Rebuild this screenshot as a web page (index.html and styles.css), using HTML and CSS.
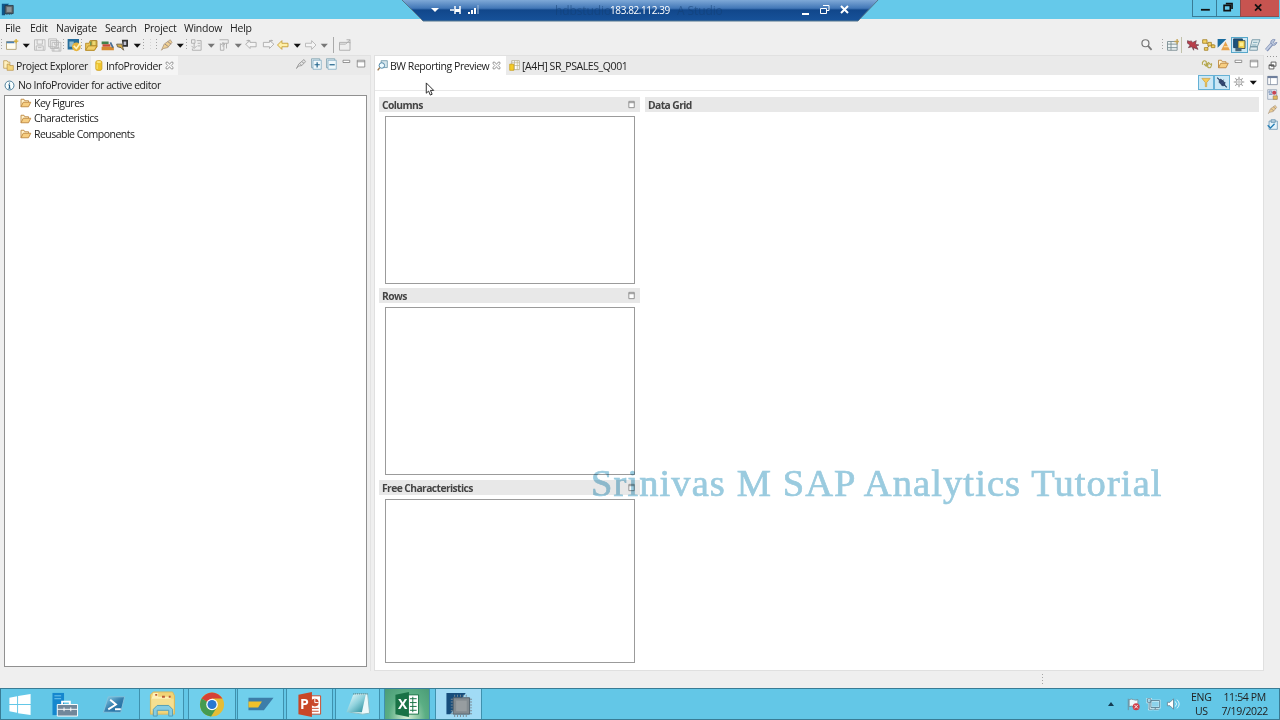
FILE: index.html
```html
<!DOCTYPE html>
<html lang="en">
<head>
    <meta charset="UTF-8">
    <title>hdbstudio - SAP HANA Studio</title>
    <link rel="stylesheet" href="styles.css">
</head>
<body>
<!-- icon set -->
<svg class="sprite" width="0" height="0">
    <defs>
        <linearGradient id="blueGlass" x1="0" y1="0" x2="1" y2="1">
            <stop offset="0" stop-color="#8fd6ee"/><stop offset=".5" stop-color="#367fae"/><stop offset="1" stop-color="#14679f"/>
        </linearGradient>
        <linearGradient id="paper" x1="0" y1="0" x2="1" y2="1">
            <stop offset="0" stop-color="#f3ffff"/><stop offset=".5" stop-color="#8ed1dc"/><stop offset="1" stop-color="#218794"/>
        </linearGradient>
        <linearGradient id="barFill" x1="0" y1="0" x2="0" y2="1">
            <stop offset="0" stop-color="#86afdb"/><stop offset=".42" stop-color="#4277b7"/><stop offset=".5" stop-color="#11478b"/><stop offset="1" stop-color="#17529a"/>
        </linearGradient>
    </defs>
    <symbol id="chip" viewBox="0 0 16 16"><path d="M1 1h9L5 6v9H1z" fill="#0d5588"/><path d="M5 3h10v10H5z" fill="#5c6469" stroke="#253746"/><path d="M7 5h6v6H7z" fill="#8c9598"/><path d="M4 14h10" stroke="#31424d" stroke-dasharray="1 1"/></symbol>
    <symbol id="new" viewBox="0 0 16 16"><path d="M2 4h11v9H2z" fill="#fffdf1" stroke="#ad9d70"/><path d="M2 4h9v2H2z" fill="#4c82b5"/><path d="M13 1v5M10.500 3.500h5" stroke="#d6ad32" stroke-width="1.500"/></symbol>
    <symbol id="save" viewBox="0 0 16 16"><path d="M2 2h12v12H2zM5 2v5h6V2M4 14v-5h8v5M6 11h4" fill="#eee" stroke="#b8b8b8"/></symbol>
    <symbol id="saveall" viewBox="0 0 16 16"><path d="M1 1h9v9H1zM3 3h9v9H3zM5 5h10v10H5zM8 5v3h4V5M7 15v-4h6v4" fill="#eee" stroke="#b8b8b8"/></symbol>
    <symbol id="schedule" viewBox="0 0 16 16"><path d="M1 1h13v12H1z" fill="#236d9d"/><path d="M3 4h5v6H3z" fill="#90bbcd"/><circle cx="11" cy="10" r="5" fill="#e6b43e"/><path d="M8 9l3 3 5-7" fill="none" stroke="#fff4bd" stroke-width="1.800"/></symbol>
    <symbol id="openproj" viewBox="0 0 16 16"><path d="M1 14V6h4l1-3h8v7l-3 4z" fill="#eac557" stroke="#b68a27"/><path d="M6 10V4h5v6z" fill="#719b54"/><path d="M8 3h5v6H8z" fill="#eed86e" stroke="#a68532"/><path d="M1 14l3-5h10l-3 5z" fill="#f1cf69" stroke="#b68a27"/></symbol>
    <symbol id="books" viewBox="0 0 16 16"><path d="M1 4h8v3H1z" fill="#41824b"/><path d="M2 7h9v3H2z" fill="#c84c38"/><path d="M1 10h14v4H1z" fill="#d58a31"/><path d="M11 5l3 6" stroke="#486f95" stroke-width="2"/></symbol>
    <symbol id="debug" viewBox="0 0 16 16"><path d="M7 2h7v8H8z" fill="#333"/><path d="M9 4h3v4H9z" fill="#c2c4d4"/><path d="M1 7h6l2 7-3-3-4-1z" fill="#d6af4c" stroke="#675b49"/></symbol>
    <symbol id="torch" viewBox="0 0 16 16"><path d="M2 14L5 7l7-5 2 3-5 6-5 1z" fill="#efcf92" stroke="#b09a80"/><path d="M6 7l4 3M9 4l4 3" stroke="#8f8487"/></symbol>
    <symbol id="torchgray" viewBox="0 0 16 16"><path d="M2 14l3-6 7-6 2 3-5 5-5 1z" fill="#e5e5e5" stroke="#8c8c8c"/><path d="M6 7l3 3M9 5l3 2" stroke="#8c8c8c"/></symbol>
    <symbol id="annotdown" viewBox="0 0 16 16"><path d="M2 2h4v4H2zM5 6v5M2 9l3 3 3-3M8 3h5v11H3v-2" fill="none" stroke="#aaa"/><path d="M9 6h3M9 9h3" stroke="#aaa"/></symbol>
    <symbol id="annotup" viewBox="0 0 16 16"><path d="M2 2h10v4H7v8H3V6M6 10V6M4 8l2-3 2 3M10 6v6" fill="none" stroke="#aaa"/></symbol>
    <symbol id="lastedit" viewBox="0 0 16 16"><path d="M1 7l5-4v2h7v5H6v2zM4 2v2M2 3h4" fill="#f4f4f4" stroke="#aaa"/></symbol>
    <symbol id="nextedit" viewBox="0 0 16 16"><path d="M15 7l-5-4v2H3v5h7v2zM12 2v2M10 3h4" fill="#f4f4f4" stroke="#aaa"/></symbol>
    <symbol id="back" viewBox="0 0 16 16"><path d="M2 8l5-5v3h7v4H7v3z" fill="#fff0a8" stroke="#c39a31"/></symbol>
    <symbol id="forward" viewBox="0 0 16 16"><path d="M14 8L9 3v3H2v4h7v3z" fill="#f5f5f5" stroke="#b4b4b4"/></symbol>
    <symbol id="pin" viewBox="0 0 16 16"><path d="M2 5h12v9H2zM2 7h7M10 2h4v4M14 2L9 7" fill="#eee" stroke="#a9a9a9"/></symbol>
    <symbol id="search" viewBox="0 0 16 16"><circle cx="6.500" cy="6" r="4" fill="#f5f5f5" stroke="#777" stroke-width="1.400"/><path d="M9.500 9l4 4.500" stroke="#777" stroke-width="2"/></symbol>
    <symbol id="perspective" viewBox="0 0 16 16"><path d="M2 4h11v10H2zM2 7h11M6 4v10M2 11h11" fill="#eef4f4" stroke="#788b91"/><path d="M13 1v6M10 4h5" stroke="#c2a252" stroke-width="1.500"/></symbol>
    <symbol id="redbug" viewBox="0 0 16 16"><path d="M2 3l3 1 1-1 2 2 4-2-1 4 4 1-3 1 2 4-5-2v3l-2-4-4 1 2-3-3-2z" fill="#b93d49" stroke="#5f3441" stroke-width=".7"/></symbol>
    <symbol id="branch" viewBox="0 0 16 16"><path d="M3 4l6 4-4 5M9 8h5" fill="none" stroke="#9a7c29"/><path d="M1 2h5v4H1zM7 5h4v4H7zM3 11h4v3H3zM11 8h4v3h-4z" fill="#f4d260" stroke="#a7852d"/></symbol>
    <symbol id="modeler" viewBox="0 0 16 16"><path d="M1 1h10L1 11z" fill="#1a6c9f"/><path d="M10 4l5 10H5z" fill="#e7a24c"/><path d="M8 10h5" stroke="#fff3c5"/></symbol>
    <symbol id="bw" viewBox="0 0 16 16"><path d="M1 1h10v10H1z" fill="#1c527c" stroke="#163a5e"/><path d="M6 3h8v9H6z" fill="#f3d24f" stroke="#3f4b48"/><path d="M3 11h7v4H3z" fill="#466779"/><path d="M8 5h4v4H8z" fill="#fff095"/></symbol>
    <symbol id="script" viewBox="0 0 16 16"><path d="M5 2h9l-3 8H3zM3 10h8v4H2z" fill="#ddebed" stroke="#6f92a2"/><path d="M6 5h5M5 8h5" stroke="#76a4b5"/></symbol>
    <symbol id="wrench" viewBox="0 0 16 16"><path d="M3 14l7-8" stroke="#8291b6" stroke-width="4"/><path d="M3 13.500l7-8" stroke="#c5d0e4" stroke-width="2"/><path d="M8 5c0-3 3-4 5-3l-2 3 1 1 3-1c-1 3-3 4-5 3z" fill="#bac7dc" stroke="#8291b6"/></symbol>
    <symbol id="explorer" viewBox="0 0 16 16"><path d="M1 1h5l1 2h3v9H1z" fill="#fff1be" stroke="#b89045"/><path d="M6 6h3l1 2h5v7H6z" fill="#f5d579" stroke="#b89045"/></symbol>
    <symbol id="db" viewBox="0 0 16 16"><path d="M4 3c0-3 9-3 9 0v10c0 3-9 3-9 0z" fill="#efc52e" stroke="#c79b20"/><ellipse cx="8.500" cy="3" rx="3.500" ry="1.500" fill="#fae88a"/><path d="M6 6v7" stroke="#fbe880" stroke-width="1.500"/></symbol>
    <symbol id="close" viewBox="0 0 16 16"><path d="M2 2h3l3 4 3-4h3v3l-3 3 3 3v3h-3l-3-4-3 4H2v-3l3-3-3-3z" fill="#fff" stroke="#777" stroke-width="1.300"/></symbol>
    <symbol id="expand" viewBox="0 0 16 16"><path d="M2 1h11v12H2z" fill="#d9e8ef" stroke="#7c9eac"/><path d="M4 3h11v12H4z" fill="#f0f8fb" stroke="#79a6bd"/><path d="M9.500 5.500v7M6 9h7" stroke="#21648c" stroke-width="1.600"/></symbol>
    <symbol id="collapse" viewBox="0 0 16 16"><path d="M2 1h11v12H2z" fill="#d9e8ef" stroke="#7c9eac"/><path d="M4 3h11v12H4z" fill="#f0f8fb" stroke="#79a6bd"/><path d="M6 9h7" stroke="#21648c" stroke-width="1.600"/></symbol>
    <symbol id="min" viewBox="0 0 16 16"><path d="M4 3h9v3H4z" fill="#fff" stroke="#777"/></symbol>
    <symbol id="max" viewBox="0 0 16 16"><path d="M3 3h10v9H3zM3 5h10" fill="#fff" stroke="#777"/></symbol>
    <symbol id="info" viewBox="0 0 16 16"><circle cx="8" cy="8" r="6.500" fill="#f9ffff" stroke="#3c7190" stroke-width="1.300"/><path d="M8 7v5M6.500 7H8M6.500 12h3" stroke="#1b5983" stroke-width="1.700"/><circle cx="8" cy="4.500" r="1" fill="#1b5983"/></symbol>
    <symbol id="folder" viewBox="0 0 16 16"><path d="M2 13V3h4l1 2h5v2" fill="#fff2cc" stroke="#bd8841" stroke-width="1.200"/><path d="M2 13l3-6h10l-3 6z" fill="#f7ce82" stroke="#bd8841" stroke-width="1.200"/></symbol>
    <symbol id="preview" viewBox="0 0 16 16"><path d="M6 1h9v10H6z" fill="#d8e7ed" stroke="#56869c"/><circle cx="7" cy="8" r="4" fill="#eefaff" stroke="#4b83a5" stroke-width="1.400"/><path d="M4 11l-3 4" stroke="#9b7951" stroke-width="2"/></symbol>
    <symbol id="query" viewBox="0 0 16 16"><path d="M4 1h11v13H4z" fill="#fff" stroke="#a69e77"/><path d="M4 4h11M8 1v13M12 1v13M4 8h11" stroke="#b9b18a"/><path d="M1 6h6v9H1z" fill="#f6cc24" stroke="#c39a19"/></symbol>
    <symbol id="sync" viewBox="0 0 16 16"><path d="M2 9c-1-4 2-7 5-4v5M4 8l3 3 3-3M14 7c1 4-2 8-5 5V8M7 9l3-3 3 3" fill="none" stroke="#b5a84f" stroke-width="1.500"/></symbol>
    <symbol id="filter" viewBox="0 0 16 16"><path d="M2 2h12l-5 6v6H7V8z" fill="#f6cb59" stroke="#cc9e3c"/></symbol>
    <symbol id="link" viewBox="0 0 16 16"><path d="M1 1l4 4M11 11l4 4" stroke="#233d61" stroke-width="1.500"/><path d="M4 5l2-2 6 5v4l-3 1-5-5z" fill="#374b76" stroke="#1c3154"/><path d="M5 8l6-4M7 12l6-4" stroke="#273b60"/></symbol>
    <symbol id="gear" viewBox="0 0 16 16"><path d="M8 1v14M1 8h14M3 3l10 10M13 3L3 13" stroke="#999" stroke-width="1.400"/><circle cx="8" cy="8" r="4" fill="#eee" stroke="#999"/><circle cx="8" cy="8" r="1.500" fill="#fff" stroke="#aaa"/></symbol>
    <symbol id="restore" viewBox="0 0 16 16"><path d="M6 3h7v6H6zM3 7h7v6H3zM3 8h7" fill="#fff" stroke="#555" stroke-width="1.300"/></symbol>
    <symbol id="view" viewBox="0 0 16 16"><path d="M1 2h14v12H1z" fill="#fff" stroke="#66758d"/><path d="M1 3h14" stroke="#6e7e9b" stroke-width="3"/><path d="M5 4v10" stroke="#7c899a"/></symbol>
    <symbol id="reports" viewBox="0 0 16 16"><path d="M1 1h13v14H1z" fill="#e8edf4" stroke="#8797ac"/><path d="M3 3h4v3H3zM3 8h5" fill="none" stroke="#5a7baa"/><circle cx="10.500" cy="5.500" r="3" fill="#c74455"/><path d="M9 10h6v5H9z" fill="#e5bb5a" stroke="#a28459"/></symbol>
    <symbol id="tasks" viewBox="0 0 16 16"><path d="M3 3h12v12H3zM6 1h6v4H6z" fill="#e6f3fa" stroke="#5687a7"/><path d="M1 9l4 4 6-6" fill="none" stroke="#267eb5" stroke-width="2"/></symbol>
    <symbol id="caret" viewBox="0 0 10 10"><path d="M2 3.500h6.500L5.200 7z" fill="currentColor"/></symbol>
    <symbol id="maxbox" viewBox="0 0 10 10"><path d="M1.500 1.500h6v7h-6zM1.500 3h6" fill="#fff" stroke="#888"/></symbol>
</svg>

<div class="titlebar">
    <svg class="app-icon"><use href="#chip"/></svg>
    <div class="window-buttons">
        <div class="win-btn"><svg viewBox="0 0 24 18"><path d="M8 11h10" stroke="#111" stroke-width="2"/></svg></div>
        <div class="win-btn"><svg viewBox="0 0 24 18"><path d="M9 4h7v6M7 6h7v6H7z" fill="none" stroke="#111" stroke-width="1.800"/></svg></div>
        <div class="win-btn win-close"><svg viewBox="0 0 24 18"><path d="M7 5l7 7M14 5l-7 7" stroke="#111" stroke-width="2"/></svg></div>
    </div>
    <!-- remote desktop connection bar -->
    <div class="connection">
        <svg class="connection-bg" viewBox="0 0 478 22"><path d="M0-1h478l-21 22H22z" fill="url(#barFill)"/><path d="M0-1l22 22h435l21-22" fill="none" stroke="#55778d"/></svg>
        <span class="ghost-title">hdbstudio</span>
        <span class="address">183.82.112.39</span>
        <span class="ghost-title ghost-end">A Studio</span>
        <svg class="connection-icons" viewBox="0 0 478 22" fill="none" stroke="#fff">
            <path d="M30 8h8l-4 4z" fill="#fff" stroke="none"/>
            <path d="M49 10h4M54 6v8M59 6v8" stroke-width="1.500"/><path d="M54 10.500h5" stroke-width="3"/>
            <path d="M68 14v-2M71 14v-4M74 14V8" stroke-width="2"/><path d="M77 14V5" stroke="#a4bfdb"/>
            <path d="M401 14h7" stroke-width="2"/>
            <path d="M422 5.500h6v5h-2M419.500 8.500h6v5h-6z"/>
            <path d="M440 6l7 7M447 6l-7 7" stroke-width="2"/>
        </svg>
    </div>
</div>

<div class="menubar">
    <span class="m-file">File</span><span class="m-edit">Edit</span><span class="m-nav">Navigate</span><span class="m-search">Search</span><span class="m-project">Project</span><span class="m-window">Window</span><span class="m-help">Help</span>
</div>

<div class="toolbar">
    <i class="grip"></i>
    <svg class="icon"><use href="#new"/></svg><svg class="caret"><use href="#caret"/></svg>
    <svg class="icon"><use href="#save"/></svg><svg class="icon"><use href="#saveall"/></svg>
    <i class="grip"></i>
    <svg class="icon"><use href="#schedule"/></svg>
    <i class="grip"></i>
    <svg class="icon"><use href="#openproj"/></svg><svg class="icon"><use href="#books"/></svg><svg class="icon"><use href="#debug"/></svg><svg class="caret"><use href="#caret"/></svg>
    <i class="grip"></i><i class="grip faint"></i><i class="grip"></i>
    <svg class="icon"><use href="#torch"/></svg><svg class="caret"><use href="#caret"/></svg>
    <i class="grip"></i>
    <svg class="icon"><use href="#annotdown"/></svg><svg class="caret dim"><use href="#caret"/></svg>
    <svg class="icon"><use href="#annotup"/></svg><svg class="caret dim"><use href="#caret"/></svg>
    <svg class="icon"><use href="#lastedit"/></svg><svg class="icon"><use href="#nextedit"/></svg>
    <svg class="icon"><use href="#back"/></svg><svg class="caret"><use href="#caret"/></svg>
    <svg class="icon"><use href="#forward"/></svg><svg class="caret dim"><use href="#caret"/></svg>
    <i class="rule"></i>
    <svg class="icon"><use href="#pin"/></svg>
    <div class="perspectives">
        <svg class="icon search"><use href="#search"/></svg>
        <i class="grip"></i>
        <svg class="icon"><use href="#perspective"/></svg>
        <i class="rule"></i>
        <svg class="icon"><use href="#redbug"/></svg><svg class="icon"><use href="#branch"/></svg><svg class="icon"><use href="#modeler"/></svg>
        <svg class="icon active"><use href="#bw"/></svg><svg class="icon"><use href="#script"/></svg><svg class="icon"><use href="#wrench"/></svg>
    </div>
</div>

<div class="workbench">
    <div class="side-view">
        <div class="tabs">
            <div class="tab tab-explorer"><svg><use href="#explorer"/></svg><span class="label">Project Explorer</span></div>
            <div class="tab tab-info"><svg><use href="#db"/></svg><span class="label">InfoProvider</span><svg class="x"><use href="#close"/></svg></div>
            <div class="tab-tools">
                <svg><use href="#torchgray"/></svg><svg><use href="#expand"/></svg><svg><use href="#collapse"/></svg><svg><use href="#min"/></svg><svg><use href="#max"/></svg>
            </div>
        </div>
        <div class="message"><svg><use href="#info"/></svg><span>No InfoProvider for active editor</span></div>
        <div class="tree">
            <div class="node"><svg><use href="#folder"/></svg><span>Key Figures</span></div>
            <div class="node"><svg><use href="#folder"/></svg><span>Characteristics</span></div>
            <div class="node"><svg><use href="#folder"/></svg><span>Reusable Components</span></div>
        </div>
    </div>

    <div class="editor">
        <div class="tabs">
            <div class="tab tab-preview"><svg><use href="#preview"/></svg><span class="label">BW Reporting Preview</span><svg class="x"><use href="#close"/></svg></div>
            <div class="tab tab-query"><svg><use href="#query"/></svg><span class="label">[A4H] SR_PSALES_Q001</span></div>
            <div class="tab-tools">
                <svg><use href="#sync"/></svg><svg><use href="#folder"/></svg><svg><use href="#min"/></svg><svg><use href="#max"/></svg>
            </div>
        </div>
        <div class="editor-tools">
            <div class="toggle"><svg><use href="#filter"/></svg></div><div class="toggle"><svg><use href="#link"/></svg></div>
            <svg class="gear"><use href="#gear"/></svg><svg class="caret"><use href="#caret"/></svg>
        </div>
        <div class="layout">
            <div class="axes">
                <div class="section"><div class="section-head"><span>Columns</span><svg><use href="#maxbox"/></svg></div><div class="drop"></div></div>
                <div class="section"><div class="section-head"><span>Rows</span><svg><use href="#maxbox"/></svg></div><div class="drop"></div></div>
                <div class="section"><div class="section-head"><span>Free Characteristics</span><svg><use href="#maxbox"/></svg></div><div class="drop"></div></div>
            </div>
            <div class="grid"><div class="section-head"><span>Data Grid</span></div></div>
        </div>
    </div>

    <div class="trim">
        <i class="trim-grip"></i>
        <svg><use href="#restore"/></svg><svg><use href="#view"/></svg><svg><use href="#reports"/></svg><svg><use href="#torch"/></svg><svg><use href="#tasks"/></svg>
    </div>
</div>

<div class="statusbar"><i class="grip"></i></div>

<div class="taskbar">
    <div class="task start"><svg viewBox="0 0 28 28"><path d="M3 7l8-1.500v8H3zM12 5.300L25 3v10.500H12zM3 14.500h8v8L3 21zM12 14.500h13V25l-13-2z" fill="#fff"/></svg></div>
    <div class="task server"><svg viewBox="0 0 28 28"><path d="M1 2h12v23H1z" fill="#1587ce"/><path d="M3 5h7M3 8h7" stroke="#75c9ee"/><path d="M11 14v-3h8v3" fill="none" stroke="#fff" stroke-width="2"/><path d="M6 14h21v12H6z" fill="#71879a" stroke="#fff"/><path d="M6 19h21M13 17v4M20 17v4" stroke="#fff"/></svg></div>
    <div class="task shell"><svg viewBox="0 0 28 28"><path d="M7 6h17l-4 16H2z" fill="url(#blueGlass)" stroke="#86c3dc"/><path d="M9 9l6 5-8 5M14 19h6" fill="none" stroke="#fff" stroke-width="2"/></svg></div>
    <div class="task framed files"><svg viewBox="0 0 28 28"><path d="M2 4l3-3h20l2 4v19H2z" fill="#f1d477" stroke="#d8b85e"/><path d="M5 2h5v4h13v3H3" fill="#fff1b8"/><path d="M7 4h2M14 6h3M21 6h2" stroke="#bd5c35" stroke-width="2"/><path d="M3 8h23v13H3z" fill="#f5df91"/><path d="M5 26v-7l4-4h12l4 4v7h-4v-6H9v6z" fill="#85cce3" stroke="#519db6"/></svg></div>
    <div class="task framed chrome"><svg viewBox="0 0 28 28"><circle cx="14" cy="14" r="12.500" fill="#e5bd35"/><path d="M14 14L3.200 7.800A12.500 12.500 0 0 1 24.800 7.800H14z" fill="#d64235"/><path d="M3.200 7.800A12.500 12.500 0 0 0 13 26.500l6-9.500-5-3z" fill="#449b50"/><circle cx="14" cy="14" r="6" fill="#fff"/><circle cx="14" cy="14" r="4.700" fill="#2877d0"/></svg></div>
    <div class="task framed logon"><svg viewBox="0 0 28 28"><path d="M1 7h26L17 20H1z" fill="#3c7da9"/><path d="M1 11h14l-4 6H1z" fill="#efc12c"/></svg></div>
    <div class="task framed ppt"><svg viewBox="0 0 28 28"><path d="M14 5h11v19H14z" fill="#fff" stroke="#c94a2c"/><circle cx="19" cy="12" r="4" fill="#c94a2c"/><path d="M16 18h7M16 21h7" stroke="#c94a2c"/><path d="M19 8v4h4" fill="none" stroke="#fff"/><path d="M2 4l14-3v26L2 24z" fill="#c94727"/></svg><b>P</b></div>
    <div class="task framed notes"><svg viewBox="0 0 28 28"><path d="M10 3h14l2 20-7 1-14-2z" fill="#edf9fa" stroke="#8abdc4"/><path d="M9 4h13l-4 18H2z" fill="url(#paper)"/><path d="M9 3h15" stroke="#497f86" stroke-dasharray="1 1"/></svg></div>
    <div class="task framed excel"><svg viewBox="0 0 28 28"><path d="M14 4h12v20H14z" fill="#fff" stroke="#197246"/><path d="M17 8h7M17 12h7M17 16h7M17 20h7M20 6v16" stroke="#197246"/><path d="M2 4l14-3v26L2 24z" fill="#197246"/></svg><b>X</b></div>
    <div class="task framed studio"><svg viewBox="0 0 28 28"><path d="M1 2h20L5 24H1z" fill="#164d7c"/><path d="M8 7h17v17H8z" fill="#838b90" stroke="#53616b"/><path d="M9 26h15M6.500 8v16M26.500 8v16M9 5h15" stroke="#7d8a94" stroke-width="2" stroke-dasharray="1 2"/><path d="M11 10h11v11H11z" fill="#979da0"/></svg></div>
    <div class="tray">
        <svg class="up" viewBox="0 0 8 8"><path d="M1 6l3-4 3 4z" fill="#143b52"/></svg>
        <svg viewBox="0 0 16 16"><path d="M2 2v13M3 3c4-2 6 2 10 0v8c-4 2-6-2-10 0z" fill="#eef8fb" stroke="#6e8b98"/><circle cx="11" cy="11" r="4" fill="#ce3e48"/><path d="M9 9l4 4M13 9l-4 4" stroke="#fff"/></svg>
        <svg viewBox="0 0 16 16"><path d="M5 4h10v8H5zM8 14h6M10 12v2M1 2h4v4H1zM3 6v8h4" fill="#8cd2eb" stroke="#e3f7fd" stroke-width="2"/><path d="M5 4h10v8H5zM8 14h6M10 12v2M1 2h4v4H1zM3 6v8h4" fill="none" stroke="#527d91"/></svg>
        <svg viewBox="0 0 16 16"><path d="M1 6h3l4-4v12l-4-4H1z" fill="#fff" stroke="#668797"/><path d="M10 5q3 3 0 6M12 3q5 5 0 10" fill="none" stroke="#eaf9ff"/></svg>
        <div class="lang"><span>ENG</span><span>US</span></div>
        <div class="clock"><span>11:54 PM</span><span>7/19/2022</span></div>
    </div>
</div>

<div class="watermark">Srinivas M SAP Analytics Tutorial</div>
<svg class="cursor" viewBox="0 0 10 15"><path d="M1 1v11l2.500-2.300L5.300 14l2-.9L5.500 9H9z" fill="#fff" stroke="#222"/></svg>
</body>
</html>
```
FILE: styles.css
```css
* {
    margin: 0;
    padding: 0;
    box-sizing: border-box;
}

body {
    width: 1280px;
    height: 720px;
    overflow: hidden;
    display: flex;
    flex-direction: column;
    background: #efefef;
    color: #222;
    font: 10.500px/15px "Open Sans", "Noto Sans", sans-serif;
    letter-spacing: -0.45px;
    white-space: nowrap;
}

svg {
    display: block;
    flex: none;
}

.sprite {
    position: absolute;
}

.titlebar {
    position: relative;
    flex: none;
    height: 19px;
    background: #65c9ea;
    display: flex;
    justify-content: space-between;
}

.app-icon {
    width: 13px;
    height: 13px;
    margin: 3px 1px;
}

.window-buttons {
    display: flex;
    height: 17px;
    margin-right: 1px;
}

.win-btn {
    width: 24px;
    border: 1px solid #397c96;
    border-top: 0;
    border-right: 0;
}

.win-btn svg {
    width: 23px;
    height: 16px;
}

.win-close {
    width: 39px;
    background: #c75450;
    border-color: #8b4e4d;
}

.win-close svg {
    margin-left: 7px;
}

/* lies over the title bar and the top of the menu */
.connection {
    position: absolute;
    left: 401px;
    top: 0;
    width: 478px;
    height: 22px;
    color: #fff;
    z-index: 2;
}

.connection-bg,
.connection-icons {
    position: absolute;
    width: 478px;
    height: 22px;
}

.address {
    position: absolute;
    left: 209px;
    top: 3px;
    font-size: 10px;
    letter-spacing: -0.4px;
}

.ghost-title {
    position: absolute;
    left: 154px;
    top: 3px;
    font-size: 12px;
    letter-spacing: -0.1px;
    color: #123e72;
    opacity: .5;
}

.ghost-end {
    left: 276px;
}

.menubar {
    flex: none;
    height: 18px;
    padding: 2px 0 0 5px;
    display: flex;
    letter-spacing: -0.25px;
}

.m-file { width: 25px; }
.m-edit { width: 26px; }
.m-nav { width: 49px; }
.m-search { width: 39px; }
.m-project { width: 40px; }
.m-window { width: 46px; }

.toolbar {
    flex: none;
    height: 18px;
    padding: 0 0 2px 1px;
    display: flex;
    align-items: center;
}

.icon {
    width: 15.500px;
    height: 14px;
}

.caret {
    width: 12px;
    height: 11px;
    color: #111;
}

.dim {
    color: #777;
}

.grip {
    flex: none;
    width: 3px;
    height: 12px;
    background: linear-gradient(90deg, transparent 1px, #efefef 1px), repeating-linear-gradient(#a5a5a5 0 1px, #efefef 1px 3px);
}

.faint {
    opacity: .35;
    margin: 0 3px 0 4px;
}

.rule {
    width: 1px;
    height: 16px;
    margin: 0 3px;
    background: #aaa;
}

.perspectives {
    margin-left: auto;
    display: flex;
    align-items: center;
    padding-right: 2px;
}

.perspectives .search {
    margin-right: 7px;
}

.perspectives .rule {
    margin: 0 3px 0 1px;
    background: #c1c1aa;
}

.active {
    background: #cbe8f6;
    outline: 1px solid #56a7ca;
}

.workbench {
    flex: none;
    height: 616px;
    display: flex;
}

.side-view {
    width: 371px;
    display: flex;
    flex-direction: column;
    border-right: 1px solid #e3e3e3;
}

.tabs {
    height: 20px;
    display: flex;
    background: #eaeaea;
    border-top: 1px solid #e1e1e1;
    flex: none;
}

.tab {
    display: flex;
    align-items: center;
    flex: none;
}

.tab svg {
    width: 11px;
    height: 11px;
    margin-right: 2px;
}

.tab .x {
    width: 9px;
    height: 9px;
    margin: 0 0 0 auto;
}

.label {
    padding-top: 2px;
}

.tab-explorer {
    width: 91px;
    padding-left: 3px;
    letter-spacing: -0.4px;
}

.tab-info {
    width: 87px;
    padding: 0 4px 0 2px;
    letter-spacing: -0.4px;
    background: #f5f5f5;
}

.tab-tools {
    display: flex;
    align-items: flex-start;
    margin-left: auto;
    padding-top: 2px;
}

.tab-tools svg {
    width: 12px;
    height: 12px;
    margin-right: 3px;
}

.message {
    flex: none;
    height: 20px;
    display: flex;
    align-items: center;
    padding: 1px 0 0 4px;
}

.message svg {
    width: 11px;
    height: 11px;
    margin-right: 3px;
}

.tree {
    flex: 1;
    margin: 0 3px 4px 4px;
    background: #fff;
    border: 1px solid #909090;
}

.node {
    height: 15.400px;
    display: flex;
    align-items: center;
    padding: 0 0 .5px 14px;
    letter-spacing: -0.52px;
}

.node svg {
    width: 13px;
    height: 12px;
    margin-right: 2px;
}

.editor {
    width: 890px;
    margin-left: 3px;
    display: flex;
    flex-direction: column;
    background: #fff;
    border: 1px solid #e0e0e0;
    border-top: 0;
}

.tab-preview {
    width: 131px;
    padding: 0 5px 0 2px;
    background: #fff;
}

.tab-query {
    padding-left: 3px;
    letter-spacing: -0.4px;
}

.editor .tab-tools svg {
    margin-right: 3.500px;
}

.editor-tools {
    flex: none;
    height: 16px;
    display: flex;
    justify-content: flex-end;
    align-items: center;
    padding: 0 4px 1px 0;
    border-bottom: 1px solid #e8e8e8;
}

.toggle {
    width: 16px;
    height: 15px;
    padding: 1px;
    background: #cbe8f6;
    border: 1px solid #65b1d5;
}

.toggle svg {
    width: 12px;
    height: 11px;
}

.gear {
    width: 12px;
    height: 12px;
    margin: 0 2px 0 3px;
}

.layout {
    flex: 1;
    display: flex;
    gap: 5px;
    padding: 6px 4px 7px;
}

.axes {
    width: 261px;
    display: flex;
    flex-direction: column;
    gap: 6px;
}

.section {
    height: 185.300px;
}

.section-head {
    height: 15px;
    display: flex;
    align-items: center;
    justify-content: space-between;
    padding: 0 3px 0 3px;
    background: #e8e8e8;
    color: #444;
    font-size: 10.300px;
    font-weight: 700;
    letter-spacing: -0.58px;
}

.section-head span {
    padding-top: 2px;
}

.section-head svg {
    width: 10px;
    height: 9px;
}

.drop {
    width: 250px;
    height: 167.500px;
    margin: 4px 0 0 6px;
    background: #fff;
    border: 1px solid #9b9b9b;
}

.section:last-child .drop {
    height: 164px;
}

.grid {
    flex: 1;
    letter-spacing: -0.5px;
}

.trim {
    width: 16px;
    display: flex;
    flex-direction: column;
    align-items: center;
}

.trim-grip {
    width: 10px;
    height: 1px;
    margin: 1px 0 3px;
    background: repeating-linear-gradient(90deg, #999 0 1px, transparent 1px 3px);
}

.trim svg {
    width: 11px;
    height: 11px;
    margin-bottom: 3.700px;
}

.statusbar {
    flex: none;
    height: 17px;
    padding: 3px 0 0 1042px;
    display: flex;
}

.taskbar {
    flex: none;
    height: 32px;
    display: flex;
    background: #63c7e7;
    border: 1px solid #397c95;
    line-height: 14px;
}

.task {
    position: relative;
    display: flex;
    justify-content: center;
    align-items: center;
    height: 30px;
    width: 49px;
}

.task svg {
    width: 28px;
    height: 27px;
}

.start { width: 38px; }
.server { width: 51px; }
.shell { width: 49px; }

.framed {
    margin-right: 4px;
    width: 45px;
    border-left: 1px solid #3f91ae;
    border-right: 1px solid #3f91ae;
    background: #70cfec;
}

.task b {
    position: absolute;
    left: 13px;
    top: 7px;
    color: #fff;
    font-size: 14px;
    line-height: 16px;
}

.chrome {
    width: 48px;
    margin-right: 1px;
}

.logon,
.ppt {
    width: 47px;
    margin-right: 2px;
}

.notes {
    width: 45px;
}

.excel {
    width: 46px;
    margin-right: 5px;
    background: radial-gradient(ellipse at bottom, #d8efd5, #5bae84 60%, #4a9b76);
}

.studio {
    width: 47px;
    background: #a1dbf5;
}

.tray {
    margin-left: auto;
    display: flex;
    align-items: center;
    padding-right: 11px;
}

.tray svg {
    width: 15px;
    height: 14px;
    margin-right: 5px;
}

.tray .up {
    width: 8px;
    height: 8px;
    margin-right: 11px;
}

.lang,
.clock {
    display: flex;
    flex-direction: column;
    align-items: center;
    margin-left: 5px;
    letter-spacing: -0.35px;
}

.clock {
    margin-left: 10px;
}

/* video overlays */
.watermark {
    position: absolute;
    left: 591px;
    top: 463px;
    font: 37px/42px "Liberation Serif", serif;
    letter-spacing: 1.060px;
    transform: scaleX(1.04);
    transform-origin: left;
    color: #9acbdf;
    -webkit-text-stroke: .7px #9acbdf;
    mix-blend-mode: multiply;
}

.cursor {
    position: absolute;
    left: 425px;
    top: 82px;
    width: 10px;
    height: 14px;
}
```
